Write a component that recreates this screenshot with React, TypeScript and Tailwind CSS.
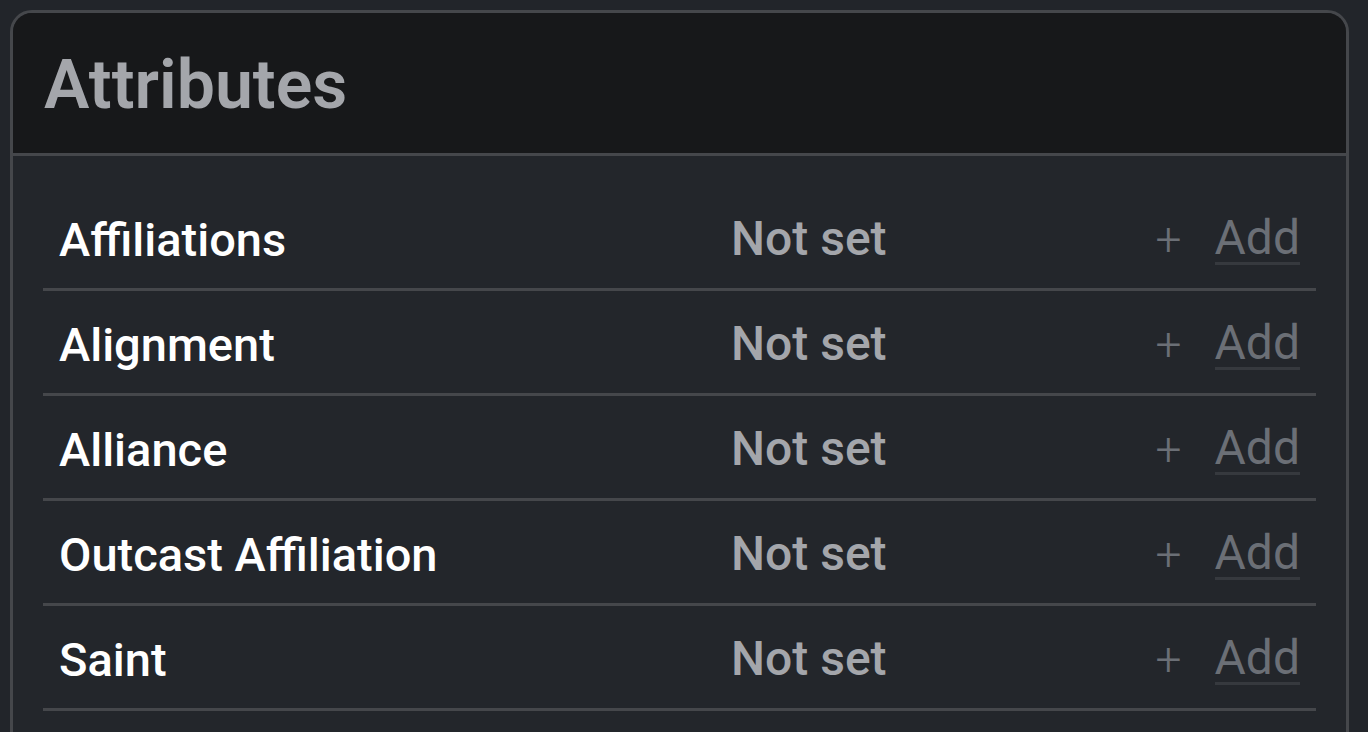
const rows = ['Affiliations', 'Alignment', 'Alliance', 'Outcast Affiliation', 'Saint'];

export default function App() {
  return (
    <div
      className="h-[732px] w-[1368px] overflow-hidden bg-[#22252a] pl-[10px] pr-[19px] pt-[10px]"
      style={{ fontFamily: 'Roboto, "Noto Sans", sans-serif' }}
    >
      <div className="h-[800px] overflow-hidden rounded-[22px] border-[3px] border-[#45474b] bg-[#23262b]">
        <div className="flex h-[143px] items-center border-b-[3px] border-[#45474b] bg-[#17181a] pl-[31px] pt-[3px]">
          <h1 className="text-[68px] font-semibold leading-none text-[#a4a6ab]">Attributes</h1>
        </div>
        <div className="px-[30px] pt-[30px]">
          {rows.map((label) => (
            <div key={label} className="flex h-[105px] items-center border-b-[3px] border-[#45474b] px-[16px] pt-[4px]">
              <span className="w-[672px] text-[47px] font-medium leading-none text-white">{label}</span>
              <span className="text-[48px] font-medium leading-none text-[#a4a6ab]">Not set</span>
              <div className="ml-auto flex items-center gap-[33px]">
                <span className="text-[46px] font-light leading-none text-[#6b6f76]">+</span>
                <span className="border-b-[3px] border-[#36393e] text-[48px] leading-none text-[#6b6f76]">Add</span>
              </div>
            </div>
          ))}
        </div>
      </div>
    </div>
  );
}
